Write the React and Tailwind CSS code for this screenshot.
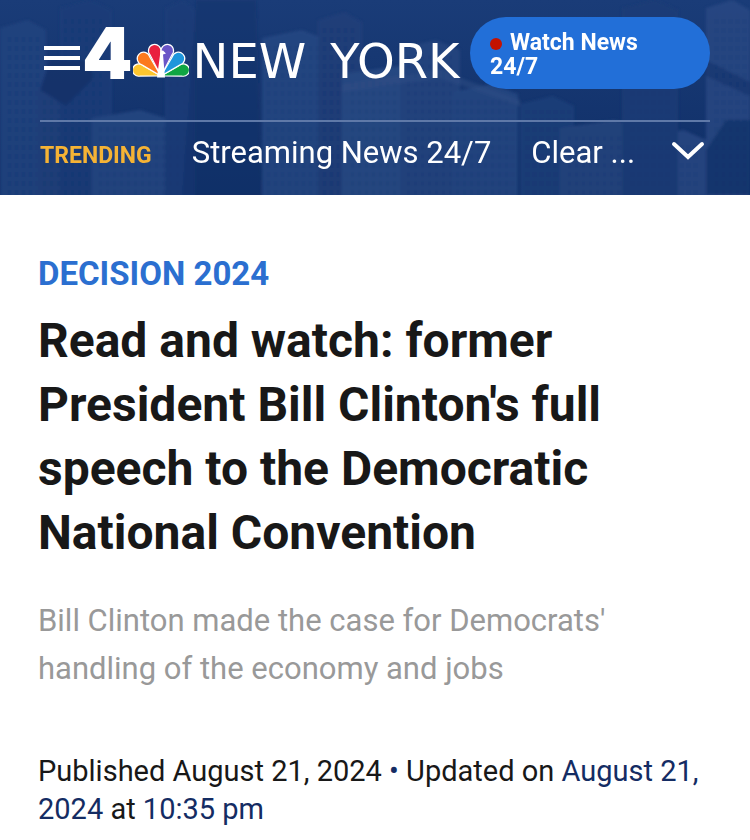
import React from 'react';

const feathers = [
  { color: '#fdc62f', rotate: -75, path: 'M0 0 L-5.4 -20 A6.2 6.2 0 1 1 5.4 -20 Z' },
  { color: '#0fa643', rotate: 75, path: 'M0 0 L-5.4 -20 A6.2 6.2 0 1 1 5.4 -20 Z' },
  { color: '#fc7a1e', rotate: -45, path: 'M0 0 L-5.6 -21.5 A6.4 6.4 0 1 1 5.6 -21.5 Z' },
  { color: '#1e96dc', rotate: 45, path: 'M0 0 L-5.6 -21.5 A6.4 6.4 0 1 1 5.6 -21.5 Z' },
  { color: '#e9203f', rotate: -14, path: 'M0 0 L-5.6 -23.5 A6.2 6.2 0 1 1 5.6 -23.5 Z' },
  { color: '#6a55c7', rotate: 14, path: 'M0 0 L-5.6 -23.5 A6.2 6.2 0 1 1 5.6 -23.5 Z' },
];

// x, top, width, shade for each tower behind the header
const towers = [
  [0, 20, 46, '#234580'],
  [38, 84, 60, '#22437c'],
  [60, 0, 52, '#1b3d79'],
  [92, 110, 80, '#264883'],
  [165, 0, 30, '#1d3e79'],
  [262, 30, 66, '#284a84'],
  [318, 12, 44, '#213f7a'],
  [342, 66, 96, '#2c4d86'],
  [400, 40, 60, '#264680'],
  [452, 84, 66, '#284983'],
  [520, 96, 54, '#1f3f7a'],
  [560, 120, 90, '#26467f'],
  [650, 130, 56, '#294a84'],
  [622, 0, 56, '#1d3c77'],
  [706, 0, 44, '#2a4a84'],
];

const Skyline = () => (
  <svg
    className="absolute inset-0 w-full h-full"
    viewBox="0 0 750 195"
    preserveAspectRatio="xMidYMid slice"
    aria-hidden="true"
  >
    <defs>
      <linearGradient id="sky" x1="0" y1="0" x2="0" y2="1">
        <stop offset="0" stopColor="#1a3c78" />
        <stop offset="1" stopColor="#0f2e66" />
      </linearGradient>
      <pattern id="windows" width="7" height="9" patternUnits="userSpaceOnUse">
        <rect x="1" y="1" width="3" height="5" fill="#10306a" />
      </pattern>
      <filter id="soft">
        <feGaussianBlur stdDeviation="1.5" />
      </filter>
    </defs>
    <rect width="750" height="195" fill="url(#sky)" />
    <g filter="url(#soft)" opacity="0.8">
      {towers.map(([x, y, w, fill]) => (
        <g key={`${x}-${y}`}>
          <path d={`M${x} ${y + 8} L${x + w * 0.6} ${y} L${x + w} ${y + 10} V200 H${x} Z`} fill={fill} />
          <rect x={x + 4} y={y + 14} width={w - 8} height="190" fill="url(#windows)" opacity="0.25" />
        </g>
      ))}
      <path d="M196 0 H256 L262 195 H182 Z" fill="#12316b" opacity="0.6" />
      <path d="M40 90 L66 106 L92 80 V60 H50 Z" fill="#12316b" />
      <path d="M706 60 L750 82 V96 L706 76 Z" fill="#12316b" opacity="0.6" />
      <path d="M342 84 L440 70 L520 100 L520 106 L440 78 L342 92 Z" fill="#35558c" opacity="0.5" />
      <path d="M706 195 V150 L726 120 H750 V195 Z" fill="#0d2b62" opacity="0.6" />
    </g>
  </svg>
);

const Peacock = () => (
  <svg className="w-14 h-9 shrink-0 mb-2" viewBox="0 0 56 36" aria-hidden="true">
    {feathers.map(f => (
      <path
        key={f.color}
        d={f.path}
        transform={`translate(28 33) rotate(${f.rotate})`}
        fill={f.color}
        stroke="#fff"
        strokeWidth="1.2"
        strokeLinejoin="round"
      />
    ))}
    <path d="M24 34.5 L27 12 Q27 7.500 30 7.500 L33 10.500 L30 11.500 L32 34.500 Z" fill="#fff" />
  </svg>
);

const Header = () => (
  <header className="relative bg-[#16366f] text-white">
    <Skyline />
    <div className="relative px-10">
      <div className="flex items-center pt-[17px] pb-[31px]">
        <button type="button" aria-label="Open menu" className="ml-1 w-9 shrink-0 flex flex-col gap-1.5 mt-[10px]">
          <span className="h-1 bg-white" />
          <span className="h-1 bg-white" />
          <span className="h-1 bg-white" />
        </button>
        <a href="#home" className="flex items-end shrink-0 h-[68px] ml-0.5">
          <span className="font-['Inter',sans-serif] font-black text-[72px] leading-[68px]">4</span>
          <Peacock />
          <span className="font-['DejaVu_Sans',sans-serif] text-5xl leading-[52px] ml-1 flex gap-6">
            <span>NEW</span>
            <span>YORK</span>
          </span>
        </a>
        <a
          href="#live"
          className="ml-auto w-60 shrink-0 rounded-full bg-[#226fd8] px-5 pt-[14px] pb-[10px] text-[23px] leading-6 font-bold"
        >
          <span className="inline-block size-3 rounded-full bg-[#c41200] mr-2" />
          Watch News 24/7
        </a>
      </div>
      <nav className="flex items-center border-t-2 border-[#5f79a8] h-[75px] pb-2">
        <div className="flex items-baseline gap-10 leading-10 whitespace-nowrap">
          <span className="text-[23px] font-bold text-[#f5b335]">TRENDING</span>
          <a href="#streaming" className="text-[31px]">Streaming News 24/7</a>
          <a href="#clear" className="text-[31px]">Clear ...</a>
        </div>
        <button type="button" aria-label="More trending" className="ml-auto mr-1 mb-2">
          <svg className="w-9 h-5" viewBox="0 0 36 20" fill="none" stroke="#fff" strokeWidth="4" strokeLinecap="round">
            <path d="M4 3 L18 16 L32 3" strokeLinejoin="miter" />
          </svg>
        </button>
      </nav>
    </div>
  </header>
);

const App = () => {
  return (
    <div className="bg-white font-['Roboto',sans-serif] text-[#181818]">
      <Header />
      <main className="px-[38px] pt-[59px] pb-3">
        <a href="#decision" className="block text-[33px] leading-10 font-bold text-[#2b6fd0]">DECISION 2024</a>
        <h1 className="mt-[15px] text-5xl leading-[64px] font-bold">
          Read and watch: former President Bill Clinton's full speech to the Democratic National Convention
        </h1>
        <p className="mt-8 text-[31px] leading-[48px] text-[#999]">
          Bill Clinton made the case for Democrats' handling of the economy and jobs
        </p>
        <p className="mt-[59px] text-[29px] leading-[38px]">
          Published August 21, 2024 <span className="text-[#142c63]">•</span> Updated on{' '}
          <time className="text-[#142c63]">August 21, 2024</time> at <time className="text-[#142c63]">10:35 pm</time>
        </p>
      </main>
    </div>
  );
};

export default App;
